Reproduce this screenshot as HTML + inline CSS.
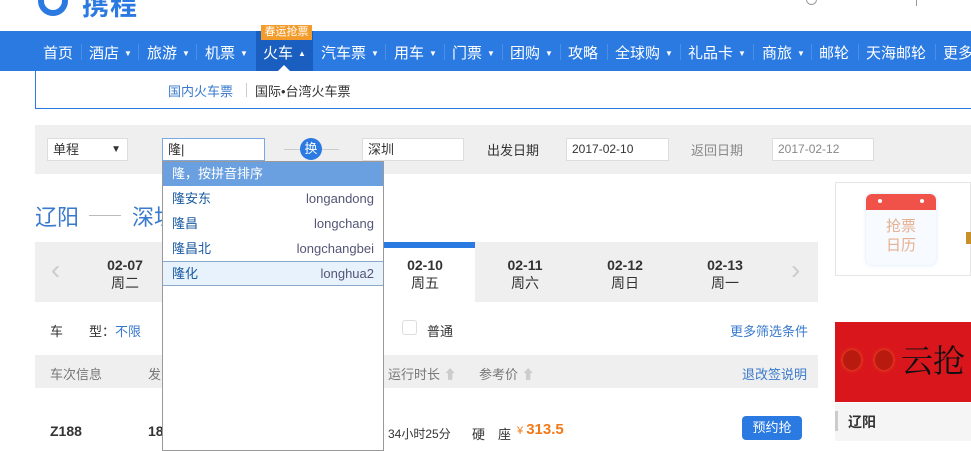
<!DOCTYPE html>
<html><head><meta charset="utf-8"><style>
*{margin:0;padding:0;box-sizing:border-box}
body{width:971px;height:441px;overflow:hidden;position:relative;background:#fff;font-family:"Liberation Sans","Noto Sans CJK SC",sans-serif;font-size:13px;color:#333}
.a{position:absolute;white-space:nowrap}
.nav{position:absolute;left:0;top:31px;width:971px;height:40px;background:#2a7ae2}
.nav span{position:absolute;top:11px;color:#fff;font-size:15px;white-space:nowrap}
.nav i{font-style:normal;font-size:8px;vertical-align:2px;margin-left:5px}
.sep{position:absolute;top:13px;width:1px;height:16px;background:#4a8ee6}
.inp{position:absolute;height:23px;background:#fff;border:1px solid #ddd;font-size:13px;padding:3px 5px;line-height:15px}
.dd div{position:absolute;left:0;width:220px;height:25px;line-height:25px;padding:0 9px;color:#1a5aa0;font-size:13px}
.dd b{float:right;font-weight:normal;color:#557}
.dt{position:absolute;top:14px;width:100px;text-align:center;font-weight:bold;font-size:14px;line-height:18px;color:#333}
</style></head><body>
<div class="a" style="left:38px;top:-14px;width:30px;height:30px;border-radius:50%;border:6px solid #2a7ae2;border-top-color:transparent"></div>
<div class="a" style="left:82px;top:-16px;font-size:27px;font-weight:bold;color:#2a7ae2;letter-spacing:1px">携程</div>
<div class="a" style="left:806px;top:-6px;width:11px;height:11px;border:1px solid #999;border-radius:50%"></div>
<div class="a" style="left:916px;top:0;width:1px;height:6px;background:#999"></div>
<div class="nav">
<span style="left:43px">首页</span><div class="sep" style="left:81px"></div>
<span style="left:89px">酒店<i>▼</i></span><div class="sep" style="left:138px"></div>
<span style="left:147px">旅游<i>▼</i></span><div class="sep" style="left:196px"></div>
<span style="left:205px">机票<i>▼</i></span>
<div style="position:absolute;left:256px;top:0;width:57px;height:40px;background:#1a5fbf"></div>
<span style="left:263px">火车<i>▲</i></span>
<span style="left:321px">汽车票<i>▼</i></span><div class="sep" style="left:385px"></div>
<span style="left:394px">用车<i>▼</i></span><div class="sep" style="left:444px"></div>
<span style="left:452px">门票<i>▼</i></span><div class="sep" style="left:502px"></div>
<span style="left:510px">团购<i>▼</i></span><div class="sep" style="left:560px"></div>
<span style="left:568px">攻略</span><div class="sep" style="left:607px"></div>
<span style="left:615px">全球购<i>▼</i></span><div class="sep" style="left:680px"></div>
<span style="left:688px">礼品卡<i>▼</i></span><div class="sep" style="left:753px"></div>
<span style="left:762px">商旅<i>▼</i></span><div class="sep" style="left:811px"></div>
<span style="left:819px">邮轮</span><div class="sep" style="left:858px"></div>
<span style="left:866px">天海邮轮</span><div class="sep" style="left:935px"></div>
<span style="left:943px">更多</span>
</div>
<div class="a" style="left:261px;top:25px;width:51px;height:15px;background:#f39c2b;color:#fff;font-size:11px;line-height:15px;text-align:center">春运抢票</div>
<div class="a" style="left:278px;top:65px;width:0;height:0;border:6px solid transparent;border-bottom-color:#fff;border-top:0"></div>
<div class="a" style="left:35px;top:71px;width:936px;height:38px;border-left:1px solid #2a7ae2;border-bottom:1px solid #2a7ae2"></div>
<div class="a" style="left:168px;top:81px;color:#3a7acc">国内火车票</div>
<div class="a" style="left:246px;top:83px;width:1px;height:14px;background:#ccc"></div>
<div class="a" style="left:255px;top:81px;color:#333">国际•台湾火车票</div>
<div class="a" style="left:35px;top:125px;width:936px;height:49px;background:#efefef"></div>
<div class="inp" style="left:47px;top:138px;width:81px">单程<span style="position:absolute;right:6px;font-size:10px">▼</span></div>
<div class="inp" style="left:162px;top:138px;width:103px;border-color:#7aa8e0">隆|</div>
<div class="a" style="left:284px;top:149px;width:55px;height:1px;background:#ccc"></div>
<div class="a" style="left:300px;top:138px;width:22px;height:22px;border-radius:50%;background:#2a7ae2;color:#fff;text-align:center;line-height:22px;font-size:13px">换</div>
<div class="inp" style="left:362px;top:138px;width:102px">深圳</div>
<div class="a" style="left:487px;top:140px">出发日期</div>
<div class="inp" style="left:566px;top:138px;width:103px;font-size:12px">2017-02-10</div>
<div class="a" style="left:691px;top:140px;color:#888">返回日期</div>
<div class="inp" style="left:772px;top:138px;width:102px;font-size:12px;color:#888">2017-02-12</div>
<div class="a" style="left:35px;top:200px;font-size:22px;color:#3a7acc">辽阳</div>
<div class="a" style="left:89px;top:215px;width:32px;height:1px;background:#bbb"></div>
<div class="a" style="left:132px;top:200px;font-size:22px;color:#3a7acc">深圳</div>
<div class="a" style="left:35px;top:242px;width:783px;height:60px;background:#efefef">
<div class="a" style="left:16px;top:14px;font-size:28px;color:#ccc;line-height:28px">‹</div>
<div class="dt" style="left:40px">02-07<br><span style="font-weight:normal">周二</span></div>
<div class="a" style="left:348px;top:0;width:92px;height:60px;background:#fff;border-top:6px solid #2a7ae2"></div>
<div class="dt" style="left:340px">02-10<br><span style="font-weight:normal">周五</span></div>
<div class="dt" style="left:440px">02-11<br><span style="font-weight:normal">周六</span></div>
<div class="dt" style="left:540px">02-12<br><span style="font-weight:normal">周日</span></div>
<div class="dt" style="left:640px">02-13<br><span style="font-weight:normal">周一</span></div>
<div class="a" style="left:756px;top:14px;font-size:28px;color:#ccc;line-height:28px">›</div>
</div>
<div class="a" style="left:835px;top:182px;width:136px;height:94px;border:1px solid #e5e5e5"></div>
<div class="a" style="left:866px;top:194px;width:70px;height:71px;border-radius:6px;background:#f7faff;box-shadow:0 0 4px #d8e6f8;overflow:hidden">
<div style="height:16px;background:#f0524a;position:relative"><i style="position:absolute;left:12px;top:5px;width:4px;height:4px;border-radius:50%;background:#fff"></i><i style="position:absolute;right:12px;top:5px;width:4px;height:4px;border-radius:50%;background:#fff"></i></div>
<div style="text-align:center;color:#e6b090;font-size:15px;line-height:19px;margin-top:7px">抢票<br>日历</div></div>
<div class="a" style="left:966px;top:232px;width:5px;height:12px;background:#c8902a"></div>
<div class="a" style="left:50px;top:321px">车　　型：<span style="color:#3a7acc">不限</span></div>
<div class="a" style="left:402px;top:320px;width:15px;height:15px;border:1px solid #ddd;border-radius:3px"></div>
<div class="a" style="left:427px;top:321px">普通</div>
<div class="a" style="left:730px;top:321px;color:#3a7acc">更多筛选条件</div>
<div class="a" style="left:35px;top:355px;width:783px;height:33px;background:#efefef"></div>
<div class="a" style="left:50px;top:364px;color:#777">车次信息</div>
<div class="a" style="left:148px;top:364px;color:#777">发</div>
<div class="a" style="left:388px;top:364px;color:#777">运行时长 <span style="color:#ccc">⬆</span></div>
<div class="a" style="left:479px;top:364px;color:#777">参考价 <span style="color:#ccc">⬆</span></div>
<div class="a" style="left:742px;top:364px;color:#3a7acc">退改签说明</div>
<div class="a" style="left:50px;top:423px;font-weight:bold;font-size:14px">Z188</div>
<div class="a" style="left:148px;top:423px;font-weight:bold;font-size:14px">18</div>
<div class="a" style="left:388px;top:425px;font-size:12px">34小时25分</div>
<div class="a" style="left:472px;top:424px">硬　座</div>
<div class="a" style="left:517px;top:421px;color:#f07a1a;font-weight:bold;font-size:15px"><span style="font-size:11px;font-weight:normal">¥ </span>313.5</div>
<div class="a" style="left:742px;top:416px;width:60px;height:24px;background:#2a7ae2;color:#fff;border-radius:4px;text-align:center;line-height:24px">预约抢</div>
<div class="a" style="left:835px;top:322px;width:136px;height:80px;background:#d8161c">
<div class="a" style="left:8px;top:28px;width:18px;height:20px;border-radius:50%;background:#b81a10;box-shadow:0 0 4px #f06020"></div>
<div class="a" style="left:40px;top:28px;width:18px;height:20px;border-radius:50%;background:#b81a10;box-shadow:0 0 4px #f06020"></div>
<div class="a" style="left:66px;top:14px;font-size:32px;color:#111;font-family:'Noto Serif CJK SC',serif">云抢</div></div>
<div class="a" style="left:835px;top:403px;width:136px;height:38px;background:#f5f5f5"></div>
<div class="a" style="left:835px;top:411px;width:3px;height:20px;background:#ccc"></div>
<div class="a" style="left:848px;top:412px;font-size:14px;font-weight:bold">辽阳</div>
<div class="a dd" style="left:162px;top:161px;width:222px;height:290px;background:#fff;border:1px solid #999">
<div style="top:0;left:0;background:#6aa0e0;color:#fff;height:24px;line-height:24px">隆，按拼音排序</div>
<div style="top:24px">隆安东<b>longandong</b></div>
<div style="top:49px">隆昌<b>longchang</b></div>
<div style="top:74px">隆昌北<b>longchangbei</b></div>
<div style="top:99px;background:#e8f2fc;border-top:1px solid #8aa8c8;border-bottom:1px solid #8aa8c8;height:25px;line-height:23px">隆化<b>longhua2</b></div>
</div>
</body></html>
